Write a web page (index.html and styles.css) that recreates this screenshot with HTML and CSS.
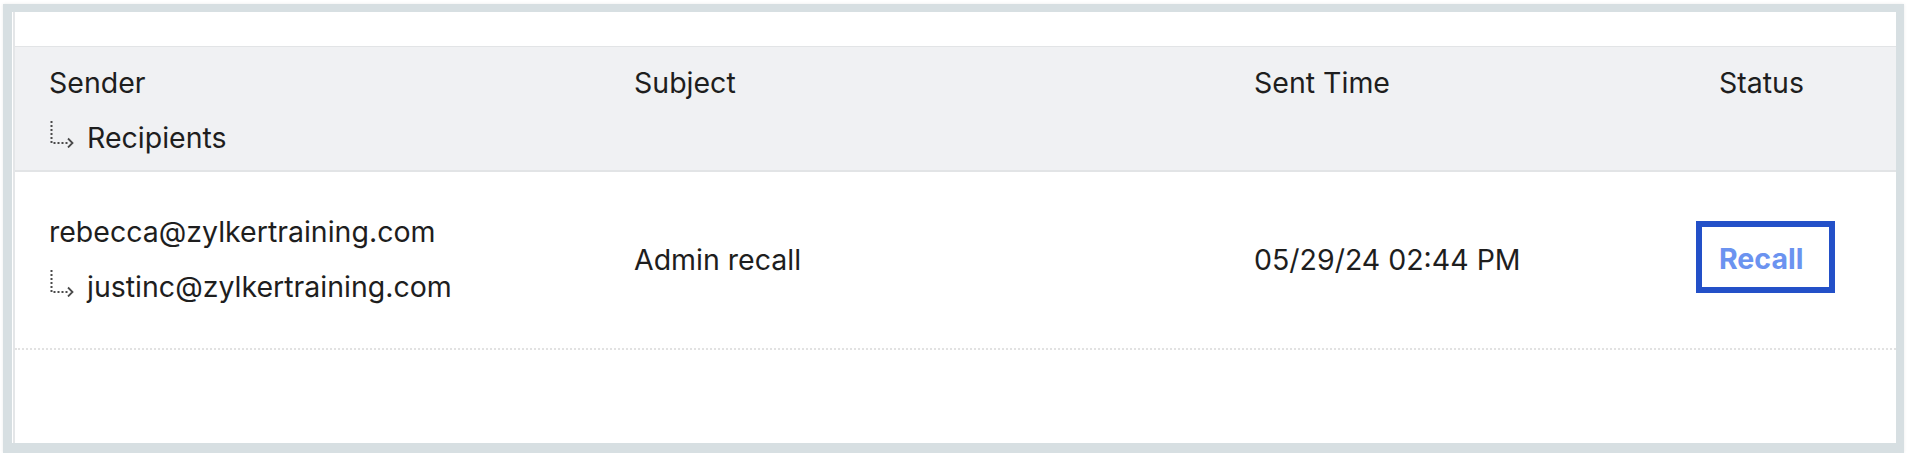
FILE: index.html
```html
<!DOCTYPE html>
<html lang="en">
<head>
    <meta charset="UTF-8">
    <meta name="viewport" content="width=device-width, initial-scale=1.0">
    <title>Recall</title>
    <link rel="stylesheet" href="styles.css">
</head>
<body>
    <div class="frame">
        <div class="panel">
            <div class="row head">
                <div class="cell">
                    <div class="line">Sender</div>
                    <div class="line">
                        <svg class="to-icon" width="26" height="28" viewBox="0 0 26 28">
                            <path d="M2.5 1 V23 H20" fill="none" stroke="#4a4a4a" stroke-width="2" stroke-dasharray="2 2"/>
                            <path d="M19 18.5 L23.5 23 L19 27.5" fill="none" stroke="#4a4a4a" stroke-width="1.8"/>
                        </svg>Recipients
                    </div>
                </div>
                <div class="cell">Subject</div>
                <div class="cell">Sent Time</div>
                <div class="cell">Status</div>
            </div>

            <div class="row item">
                <div class="cell">
                    <div class="line">rebecca@zylkertraining.com</div>
                    <div class="line">
                        <svg class="to-icon" width="26" height="28" viewBox="0 0 26 28">
                            <path d="M2.5 1 V23 H20" fill="none" stroke="#4a4a4a" stroke-width="2" stroke-dasharray="2 2"/>
                            <path d="M19 18.5 L23.5 23 L19 27.5" fill="none" stroke="#4a4a4a" stroke-width="1.8"/>
                        </svg>justinc@zylkertraining.com
                    </div>
                </div>
                <div class="cell mid">Admin recall</div>
                <div class="cell mid">05/29/24 02:44 PM</div>
                <div class="cell mid"><span class="recall">Recall</span></div>
            </div>
        </div>
    </div>
</body>
</html>
```

FILE: styles.css
```css
body {
    margin: 0;
    background: #fff;
    font-family: Inter, "Noto Sans", sans-serif;
    color: #1e1e1e;
}

.frame {
    margin: 4px 4px 0 3px;
    height: 449px;
    box-sizing: border-box;
    border-style: solid;
    border-color: #d7dfe2;
    border-width: 8px 8px 10px 9px;
    box-shadow: 0 0 3px rgba(0, 0, 0, 0.08);
    background: #fff;
}

.panel {
    height: 100%;
    margin-left: 1px;
    border-left: 2px solid #e4e6e8;
    padding-top: 34px;
    box-sizing: border-box;
}

.row {
    display: grid;
    grid-template-columns: 585px 620px 465px 1fr;
    padding-left: 34px;
    font-size: 28.5px;
    line-height: 55px;
}

.head {
    background: #f0f1f3;
    border-top: 1px solid #e2e4e6;
    border-bottom: 2px solid #e2e4e6;
    padding-top: 8px;
    padding-bottom: 5px;
}

.item {
    padding-top: 32px;
    padding-bottom: 34px;
    border-bottom: 2px dotted #e2e2e2;
}

.cell.mid {
    display: flex;
    align-items: center;
}

.to-icon {
    margin-right: 12px;
}

.recall {
    position: relative;
    font-weight: 700;
    line-height: 34px;
    color: #6b93f0;
}

/* highlight box drawn round the button */
.recall::after {
    content: "";
    position: absolute;
    left: -23px;
    right: -32px;
    top: -21px;
    bottom: -17px;
    border: 6px solid #2350c8;
}
```
